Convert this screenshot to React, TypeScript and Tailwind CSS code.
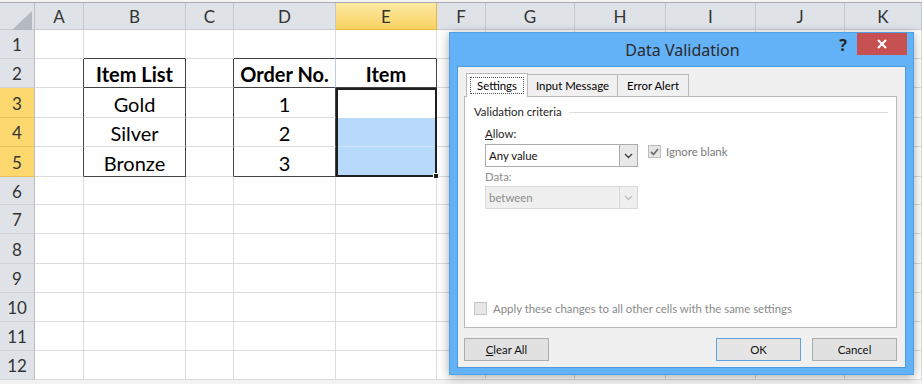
import React from "react";

const COLS = ["A", "B", "C", "D", "E", "F", "G", "H", "I", "J", "K"];
const ROWS = [1, 2, 3, 4, 5, 6, 7, 8, 9, 10, 11, 12];

const CELL_TEXT: Record<string, string> = {
  "1-2": "Item List",
  "1-3": "Gold",
  "1-4": "Silver",
  "1-5": "Bronze",
  "3-2": "Order No.",
  "4-2": "Item",
  "3-3": "1",
  "3-4": "2",
  "3-5": "3",
};

function cellClass(c: number, r: number): string {
  const k = [
    "border-r",
    "border-b",
    "border-[#dadcdd]",
    "flex",
    "items-center",
    "justify-center",
    "pt-[2px]",
    "text-[20px]",
    "text-black",
    "bg-white",
  ];
  const darkR =
    (c <= 2 && r >= 2 && r <= 5) || (c === 3 && r >= 3 && r <= 5) || (c === 4 && r === 2);
  const darkB =
    ((c === 1 || c === 3 || c === 4) && r === 1) ||
    ((c === 1 || c === 3 || c === 4) && r === 2) ||
    ((c === 1 || c === 3) && r === 5);
  if (darkR) k.push("border-r-[#444444]");
  if (darkB) k.push("border-b-[#444444]");
  if (c === 3 && r === 2) k.push("border-r-[#b8cce4]");
  if ((c === 1 || c === 3 || c === 4) && r === 2) k.push("bg-[#b8cce4]", "font-bold");
  return k.join(" ");
}

function Sheet() {
  const cells: React.ReactNode[] = [];
  cells.push(
    <div
      key="corner"
      className="relative bg-[#dfe3e8] border-r border-b border-r-[#b9bec5] border-b-[#c6cbd1]"
    >
      <svg className="absolute left-[12px] top-[8px]" width="20" height="19" viewBox="0 0 20 19">
        <polygon points="20,0 20,19 0,19" fill="#b4b9bf" />
      </svg>
    </div>
  );
  COLS.forEach((col, i) => {
    const sel = i === 4;
    cells.push(
      <div
        key={"h" + col}
        className={
          sel
            ? "flex items-center justify-center pt-[2px] bg-linear-to-b from-[#fde9a3] to-[#f9d25e] border-r border-b border-r-[#e2b748] border-b-[#e2b748] text-[17px] text-[#333]"
            : "flex items-center justify-center pt-[2px] bg-[#dfe3e8] border-r border-b border-r-[#c4c9cf] border-b-[#c6cbd1] text-[17px] text-[#333]"
        }
      >
        {col}
      </div>
    );
  });
  ROWS.forEach((r) => {
    const sel = r >= 3 && r <= 5;
    cells.push(
      <div
        key={"r" + r}
        className={
          sel
            ? "flex items-center justify-center pt-[2px] bg-[#fcd86f] border-r border-b border-r-[#b9bec5] border-b-[#e8c257] text-[17px] text-[#333]"
            : "flex items-center justify-center pt-[2px] bg-[#dfe3e8] border-r border-b border-r-[#b9bec5] border-b-[#cfd3d8] text-[17px] text-[#333]"
        }
      >
        {r}
      </div>
    );
    COLS.forEach((_, c) => {
      if (c === 4 && (r === 4 || r === 5)) return;
      if (c === 4 && r === 3) {
        cells.push(
          <div key="sel" className="row-span-3 relative flex flex-col border-2 border-[#1e1e1e]">
            <div className="h-[28px] bg-white" />
            <div className="h-[29px] bg-[#b7d9fb] border-b border-[#cfe3f8]" />
            <div className="flex-1 bg-[#b7d9fb]" />
            <div className="absolute -right-[4px] -bottom-[4px] w-[6px] h-[6px] bg-[#1e1e1e] border border-white" />
          </div>
        );
        return;
      }
      cells.push(
        <div key={c + "-" + r} className={cellClass(c, r)}>
          {CELL_TEXT[c + "-" + r] ?? ""}
        </div>
      );
    });
  });

  return (
    <div className="w-[922px] h-[384px] bg-[#f4f4f4] overflow-hidden" style={{ fontFamily: "Lato, sans-serif" }}>
      <div className="h-[3px] bg-[#f3f3f3] border-b border-[#a9adb3]" />
      <div className="grid grid-cols-[35px_49px_102px_48px_102px_101px_49px_89px_91px_90px_89px_77px] grid-rows-[27px_29px_29px_30px_29px_30px_28px_29px_30px_29px_29px_29px_29px] bg-white">
        {cells}
      </div>
      <div className="h-[4px] bg-[#f2f2f2]" />
    </div>
  );
}

function Combo({ text, disabled }: { text: string; disabled?: boolean }) {
  return (
    <div
      className={
        disabled
          ? "w-[153px] h-[23px] flex border border-[#d9d9d9] bg-[#efefef]"
          : "w-[153px] h-[23px] flex border border-[#acacac] bg-white"
      }
    >
      <div
        className={
          disabled
            ? "flex-1 flex items-center pl-[3px] text-[#8d8d8d]"
            : "flex-1 flex items-center pl-[3px] text-[#111]"
        }
      >
        {text}
      </div>
      <div
        className={
          disabled
            ? "w-[18px] flex items-center justify-center border-l border-[#d9d9d9]"
            : "w-[18px] flex items-center justify-center border-l border-[#acacac] bg-[#e8e8e8]"
        }
      >
        <svg width="9" height="6" viewBox="0 0 9 6">
          <polyline
            points="1,1 4.5,4.5 8,1"
            fill="none"
            stroke={disabled ? "#bdbdbd" : "#404040"}
            strokeWidth="1.4"
          />
        </svg>
      </div>
    </div>
  );
}

function Button({ label, primary, u }: { label: string; primary?: boolean; u?: boolean }) {
  return (
    <div
      className={
        primary
          ? "w-[85px] h-[23px] flex items-center justify-center bg-[#e5e5e5] border border-[#5fa2e0] text-[#111]"
          : "w-[85px] h-[23px] flex items-center justify-center bg-[#e1e1e1] border border-[#adadad] text-[#111]"
      }
    >
      {u ? (
        <span>
          <span className="underline">C</span>lear All
        </span>
      ) : (
        label
      )}
    </div>
  );
}

function Dialog() {
  return (
    <div
      className="absolute left-[449px] top-[32px] w-[465px] h-[343px] bg-[#63b1f7] border border-[#4f9fe6] shadow-[0_2px_10px_rgba(0,0,0,0.35)] flex flex-col"
      style={{ fontFamily: "Lato, sans-serif" }}
    >
      <div
        className="relative h-[33px] flex items-center justify-center text-[16px] text-[#2b2b2b]"
        style={{ fontFamily: "'Noto Sans', sans-serif" }}
      >
        <span className="pl-[2px]">Data Validation</span>
        <div className="absolute right-[6px] top-0 flex items-start">
          <span className="mr-[10px] text-[16px] font-bold text-[#222]">?</span>
          <div className="w-[50px] h-[22px] bg-[#c75050] flex items-center justify-center">
            <svg width="10" height="10" viewBox="0 0 10 10">
              <path d="M1 1 L9 9 M9 1 L1 9" stroke="white" strokeWidth="2" />
            </svg>
          </div>
        </div>
      </div>
      <div className="flex-1 mx-[7px] mb-[6px] bg-[#f0f0f0] border border-[#4c9be0] flex flex-col pl-[6px] pr-[8px] pt-[5px] text-[11.4px]">
        <div className="flex items-end h-[24px] pl-[2px]">
          <div className="h-[24px] w-[62px] px-[3px] pt-[3px] pb-[3px] bg-white border border-b-0 border-[#b9b9b9] relative z-10 -mb-px flex">
            <div className="flex-1 flex items-center justify-center border border-dotted border-[#555]">
              Settings
            </div>
          </div>
          <div className="h-[22px] w-[90px] flex items-center justify-center bg-[#f0f0f0] border border-l-0 border-b-0 border-[#b9b9b9]">
            Input Message
          </div>
          <div className="h-[22px] w-[71px] flex items-center justify-center bg-[#f0f0f0] border border-l-0 border-b-0 border-[#b9b9b9]">
            Error Alert
          </div>
        </div>
        <div className="h-[232px] bg-white border border-[#b9b9b9] pl-[9px] pr-[8px] pt-[7px] flex flex-col">
          <div className="flex items-center h-[16px]">
            <span className="text-[#1e1e1e]">Validation criteria</span>
            <div className="flex-1 ml-[7px] h-px bg-[#dcdcdc]" />
          </div>
          <div className="pl-[11px] mt-[6px] flex flex-col">
            <div className="h-[16px] flex items-center text-[#1e1e1e]">
              <span>
                <span className="underline">A</span>llow:
              </span>
            </div>
            <div className="flex items-start mt-[2px]">
              <Combo text="Any value" />
              <div className="ml-[10px] mt-[-1px] flex items-center">
                <div className="w-[13px] h-[13px] bg-[#e6e6e6] border border-[#bcbcbc] flex items-center justify-center">
                  <svg width="9" height="8" viewBox="0 0 9 8">
                    <polyline points="1,4 3.5,6.5 8,1" fill="none" stroke="#6f6f6f" strokeWidth="1.8" />
                  </svg>
                </div>
                <span className="ml-[5px] text-[#7a7a7a]">Ignore blank</span>
              </div>
            </div>
            <div className="h-[16px] mt-[2px] flex items-center text-[#8d8d8d]">Data:</div>
            <div className="mt-[1px]">
              <Combo text="between" disabled />
            </div>
          </div>
          <div className="flex-1" />
          <div className="flex items-center mb-[10px]">
            <div className="w-[13px] h-[13px] bg-[#e6e6e6] border border-[#c6c6c6]" />
            <span className="ml-[6px] text-[#8a8a8a]">
              Apply these changes to all other cells with the same settings
            </span>
          </div>
        </div>
        <div className="flex mt-[10px]">
          <Button label="Clear All" u />
          <div className="flex-1" />
          <Button label="OK" primary />
          <div className="w-[11px]" />
          <Button label="Cancel" />
        </div>
      </div>
    </div>
  );
}

export default function App() {
  return (
    <div className="relative w-[922px] h-[384px] overflow-hidden">
      <Sheet />
      <Dialog />
    </div>
  );
}
